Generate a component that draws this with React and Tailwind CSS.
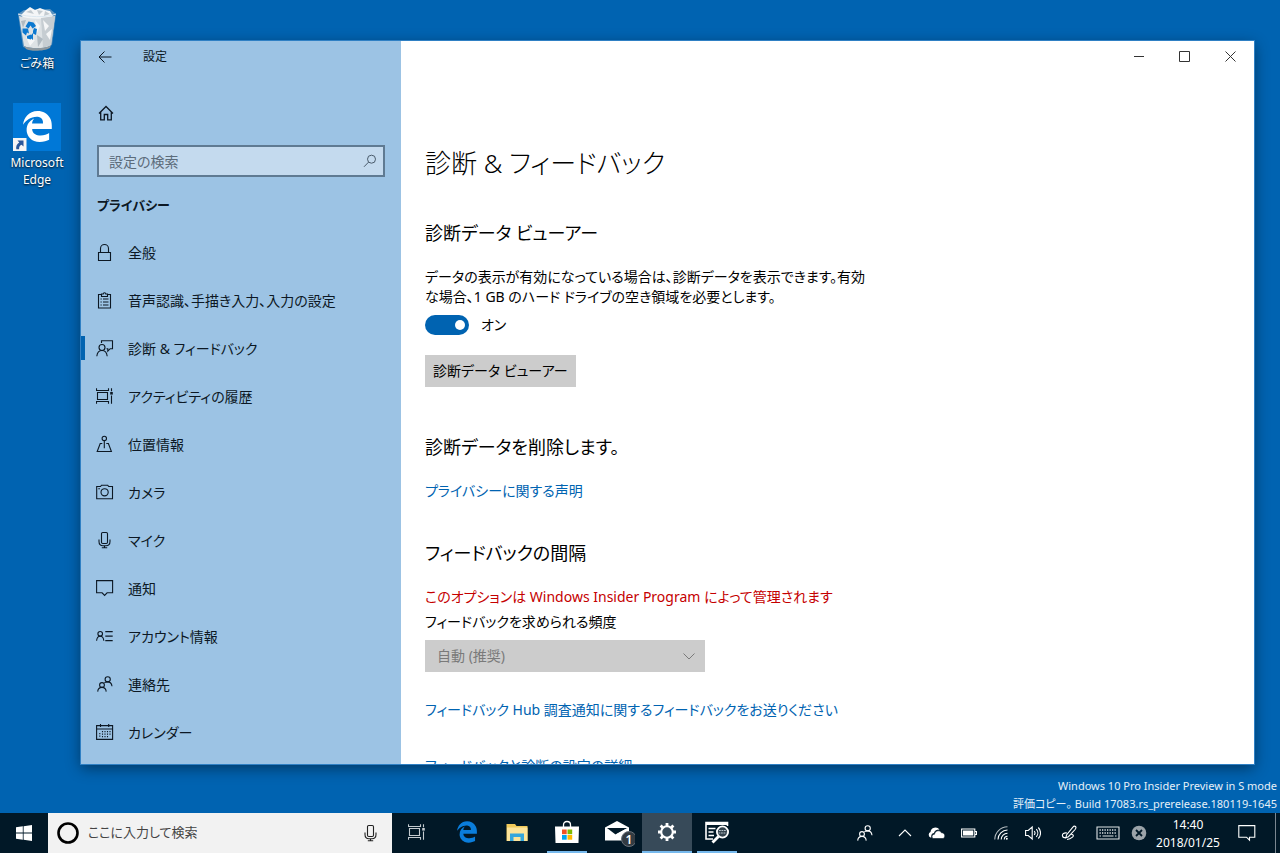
import { useState } from "react";

const EDGE_PATH =
  "M25.71,228.16l.35-.48c0,.16,0,.32-.07.48Zm460.58,15.51c0-44-7.76-84.46-28.81-122.4C416.5,47.88,343.91,8,258.89,8,119,7.72,40.62,113.21,26.06,227.68c42.42-61.31,117.07-121.38,220.37-125,0,0,109.67,0,99.42,105H170c6.37-37.39,18.55-59,34.34-78.93-75.05,34.9-121.85,96.1-120.75,188.32.83,71.45,50.13,144.84,120,172,83.35,31.84,192.77,7.2,240.13-21.33V363.31C363.6,419.8,173.6,424.23,172.21,295.74H486.29V243.67Z";

function Glyph({ size = "size-[18px]", box = 18, children }) {
  return (
    <svg
      className={`${size} shrink-0`}
      viewBox={`0 0 ${box} ${box}`}
      fill="none"
      stroke="currentColor"
      strokeWidth="1.1"
      aria-hidden="true"
    >
      {children}
    </svg>
  );
}

const people = (
  <>
    <circle cx="11.7" cy="4.3" r="2.6" />
    <path d="M8.4 7.6c.8-.5 1.8-.7 3.2-.7 2.6 0 4.1 1.6 4.4 4.3" />
    <circle cx="6" cy="10" r="2.4" />
    <path d="M1.7 16.6c.2-2.7 1.8-4.2 4.3-4.2s4 1.5 4.2 4.2" />
  </>
);

const taskView = (
  <>
    <path d="M.5 1.2v2.3h12V1.2M.5 16.8v-2.3h12v2.3M1.5 5.5h10v7h-10zM15.5 1.2v3M15.5 8.5v8.3" />
    <path d="M14.2 5h2.6v2.6h-2.6z" fill="currentColor" stroke="none" />
  </>
);

const mic = (
  <>
    <rect x="5.5" y="1.5" width="6" height="11" rx="1.2" />
    <path d="M3 8.5v2c0 2.8 1.8 4.2 4 4.2h3c2.2 0 4-1.4 4-4.2v-2M8.5 14.7v2.6M5.8 16.8h5.4" />
  </>
);

const NAV = [
  {
    label: "全般",
    icon: <path d="M2.5 9.5h12v8h-12zM4.5 9.5v-4a4 4 0 0 1 8 0v4" />,
  },
  {
    label: "音声認識、手描き入力、入力の設定",
    icon: (
      <path d="M5.5 3.5h-3v13.5h12V3.5h-3M5.5 5.5v-2.5h1.7a1.3 1.3 0 0 1 2.6 0h1.700v2.500zM4.500 8h1.200M7 8h5.500M4.500 11h1.200M7 11h5.500M4.500 14h1.200M7 14h5.500" />
    ),
  },
  {
    label: "診断 & フィードバック",
    active: true,
    icon: (
      <>
        <circle cx="6" cy="8.5" r="3" />
        <path d="M.8 17.2c.4-3.600 2.400-5.700 5.200-5.700s4.800 2.100 5.200 5.700M5.500 4V1.700h11v8h-2.300l-2.400 2.400V9.700h-1.300" />
      </>
    ),
  },
  { label: "アクティビティの履歴", icon: taskView },
  {
    label: "位置情報",
    icon: (
      <>
        <circle cx="8.3" cy="3.4" r="2.2" />
        <path d="M8.300 5.600v7.600M6.300 8.500H4.200l-3 8h14.200l-3-8h-2.100" />
      </>
    ),
  },
  {
    label: "カメラ",
    icon: (
      <>
        <path d="M.7 3.500h3.800l1-1.300h6.200l1 1.300h3.800v12.300H.7z" />
        <circle cx="8.6" cy="9.3" r="3.6" />
        <path d="M2.300 5.700h1.600" />
      </>
    ),
  },
  { label: "マイク", icon: mic },
  { label: "通知", icon: <path d="M.6 1.600h16v12.200h-5.500l-2.500 2.600-2.500-2.600H.6z" /> },
  {
    label: "アカウント情報",
    icon: (
      <>
        <circle cx="4.2" cy="6.8" r="2.3" />
        <path d="M.6 13.800c.2-3 1.500-4.600 3.600-4.600s3.400 1.600 3.600 4.600M9.300 4.600h7.400M9.300 9.100h7.400M9.300 13.600h7.400" />
      </>
    ),
  },
  { label: "連絡先", icon: people },
  {
    label: "カレンダー",
    icon: (
      <>
        <path d="M.6 2.600h16v13.800H.6zM.6 6h16M4.500 1v3M12.700 1v3" />
        <path
          d="M6.500 8v6.600M9 8v6.600M11.500 8v6.600M14 8v5M3.800 10v4.600"
          strokeDasharray="1.3 1.2"
        />
      </>
    ),
  },
];

function RecycleBin() {
  return (
    <svg className="size-12" viewBox="0 0 48 48" aria-hidden="true">
      <path d="M5 10 11 6l26-1 6 5-4 31-8 4-12 1-9-3z" fill="#a9bccb" opacity=".55" />
      <path d="M8 11 13 6l4-3 5 3 5-2 5 2 5 1 3 5-4 4H12z" fill="#f4f6f7" />
      <path d="m13 8 5-2 3 4zM24 6l6 1-4 4zM32 7l5 3-6 2z" fill="#c3cbd0" />
      <path d="M6 12c9 3 26 4 36 0l-4 29c-5 4-21 4-27 1z" fill="#dde2e5" />
      <path d="M28 14 42 12l-4 29-8 3z" fill="#c6cdd2" />
      <path d="m30 16 6 6-4 5zM33 30l6-5-2 11zM13 33l9 3-5 6zM22 16l5 6-3 7z" fill="#f5f6f7" />
      <path d="m24 31 6 4-5 8zM8 17l5-1-3 8z" fill="#b0bac1" />
      <path d="M11 42c6 3 22 3 27-1l-1 3c-5 3-19 4-24 1z" fill="#8f999f" />
      <path d="M5 10c9 3 28 4 38 0" fill="none" stroke="#dbe8f1" strokeWidth="1" />
      <g fill="#0b78d0">
        <path d="m12.500 22.500 3-5 5 1 2.500 3.500-3.500 2.500-2-3-2 3z" />
        <path d="m9.500 24.500 5.500 0 1 5-2-1-1 3-3.500-3z" />
        <path d="m14 32 4-1.500v5l-4-1z" />
        <path d="m20 29.500 3 1.500 1-6-3-1-1 3zM20 29l-3.500 4 3.500 3z" />
      </g>
    </svg>
  );
}

function EdgeTile() {
  return (
    <svg className="size-12" viewBox="0 0 48 48" aria-hidden="true">
      <path d="M0 0h48v48H0z" fill="#0078d7" />
      <g transform="translate(8.4 7.4) scale(.0625)">
        <path d={EDGE_PATH} fill="#fff" />
      </g>
      <path d="M0 35h13.500v13H0z" fill="#f5f5f5" />
      <path d="M4.500 37.500h6v6l-2-1.800c-2 1-2.500 2.300-2.400 4.600H3.300c-.6-3.200.6-5.500 3-6.900z" fill="#2a579a" />
    </svg>
  );
}

function DesktopIcon({ label, children }) {
  return (
    <button className="flex w-full flex-col items-center gap-[3px] text-center text-[12px] leading-[17px] text-white [text-shadow:0_1px_2px_rgb(0_0_0/0.9)]">
      {children}
      <span className="w-16">{label}</span>
    </button>
  );
}

function Sidebar() {
  return (
    <aside className="flex w-80 shrink-0 flex-col bg-[#9cc3e4] text-[#0c1824]">
      <div className="flex h-8 items-center text-[12px]">
        <button aria-label="戻る" className="flex h-8 w-12 items-center justify-center">
          <Glyph size="size-3.5" box={14}>
            <path d="M13.500 7H1M6.500 1.500 1 7l5.500 5.500" strokeWidth="1" />
          </Glyph>
        </button>
        <span className="pl-3.5">設定</span>
      </div>
      <button aria-label="ホーム" className="mt-4 flex h-12 w-[50px] items-center justify-center">
        <Glyph size="size-4" box={16}>
          <path d="M1 8.500 8 1.500l7 7M2.700 7v7.800h3.600V9.500h3.400v5.300h3.600V7" strokeWidth="1.300" />
        </Glyph>
      </button>
      <label className="mx-4 mt-2 flex h-8 items-center border-2 border-[#5f7a92] bg-[#c4daee] pr-1.5 pl-2.5">
        <input
          type="text"
          aria-label="設定の検索"
          placeholder="設定の検索"
          className="min-w-0 flex-1 bg-transparent text-[14px] outline-none placeholder:text-[#5c6c7b]"
        />
        <Glyph size="size-3.5" box={14}>
          <g stroke="#4a5b6b" strokeWidth="1">
            <circle cx="8.500" cy="5.200" r="4" />
            <path d="M5.600 8.100 1 12.800" />
          </g>
        </Glyph>
      </label>
      <h2 className="mt-[18px] px-4 text-[13px] leading-5 font-bold">プライバシー</h2>
      <nav className="mt-[13px]">
        {NAV.map((item) => (
          <a
            key={item.label}
            href="#"
            aria-current={item.active ? "page" : undefined}
            className="flex h-12 items-center text-[14px]"
          >
            <span className={item.active ? "h-6 w-1 bg-[#0063b1]" : "h-6 w-1"} />
            <span className="flex items-center gap-3.5 pl-[11px]">
              <Glyph>{item.icon}</Glyph>
              {item.label}
            </span>
          </a>
        ))}
      </nav>
    </aside>
  );
}

function WindowButtons() {
  return (
    <div className="flex h-8 shrink-0 justify-end text-[#333]">
      <button aria-label="最小化" className="flex w-[46px] items-center justify-center">
        <Glyph size="size-3" box={12}><path d="M1 5.500h10" strokeWidth="1" /></Glyph>
      </button>
      <button aria-label="最大化" className="flex w-[46px] items-center justify-center">
        <Glyph size="size-3" box={12}><path d="M.5.500h10v10H.5z" strokeWidth="1" /></Glyph>
      </button>
      <button aria-label="閉じる" className="flex w-[46px] items-center justify-center">
        <Glyph size="size-3" box={12}><path d="m.5.500 10 10M10.500.500l-10 10" strokeWidth="1" /></Glyph>
      </button>
    </div>
  );
}

function Content() {
  const [on, setOn] = useState(true);
  return (
    <main className="flex min-w-0 flex-1 flex-col overflow-hidden bg-white text-black">
      <WindowButtons />
      <div className="flex flex-col items-start px-6 pt-[72px] text-[14px] leading-5">
        <h1 className="text-[26px] leading-9 font-light">診断 &amp; フィードバック</h1>
        <h2 className="mt-[38px] text-[18px] leading-7">診断データ ビューアー</h2>
        <p className="mt-5">
          データの表示が有効になっている場合は、診断データを表示できます。有効
          <br />
          な場合、1 GB のハード ドライブの空き領域を必要とします。
        </p>
        <label className="mt-2 flex items-center gap-3">
          <input
            type="checkbox"
            role="switch"
            checked={on}
            onChange={(e) => setOn(e.target.checked)}
            className="flex h-5 w-11 appearance-none items-center rounded-full bg-[#777] px-1 before:size-2.5 before:rounded-full before:bg-white before:content-[''] checked:justify-end checked:bg-[#0063b1]"
          />
          {on ? "オン" : "オフ"}
        </label>
        <button className="mt-5 h-8 bg-[#ccc] px-2">診断データ ビューアー</button>
        <h2 className="mt-[46px] text-[18px] leading-7">診断データを削除します。</h2>
        <a href="#" className="mt-5 text-[#0063b1]">プライバシーに関する声明</a>
        <h2 className="mt-[38px] text-[18px] leading-7">フィードバックの間隔</h2>
        <p className="mt-5 text-[#c50000]">このオプションは Windows Insider Program によって管理されます</p>
        <label htmlFor="frequency" className="mt-[5px]">フィードバックを求められる頻度</label>
        <div className="mt-2 grid w-[280px] items-center">
          <select
            id="frequency"
            disabled
            className="col-start-1 row-start-1 h-8 appearance-none bg-[#ccc] px-3 text-[#7a7a7a] opacity-100"
          >
            <option>自動 (推奨)</option>
          </select>
          <span className="pointer-events-none col-start-1 row-start-1 mr-2.5 justify-self-end text-[#7a7a7a]">
            <Glyph size="size-3" box={12}><path d="m.5 3.500 5.500 5.500 5.500-5.500" strokeWidth="1" /></Glyph>
          </span>
        </div>
        <a href="#" className="mt-7 text-[#0063b1]">
          フィードバック Hub 調査通知に関するフィードバックをお送りください
        </a>
        <a href="#" className="mt-9 text-[#0063b1]">フィードバックと診断の設定の詳細</a>
      </div>
    </main>
  );
}

function TaskButton({ label, running, active, children }) {
  return (
    <button
      aria-label={label}
      className={
        active
          ? "flex w-[50px] flex-col items-center bg-[#374a59] text-white"
          : "flex w-[50px] flex-col items-center text-[#c3cacf]"
      }
    >
      <span className="flex flex-1 items-center justify-center">{children}</span>
      <span className={running ? (active ? "h-0.5 w-full bg-[#76b9ed]" : "h-0.5 w-10 bg-[#76b9ed]") : "h-0.5"} />
    </button>
  );
}

function TaskApps() {
  return (
    <div className="flex">
      <TaskButton label="タスク ビュー">
        <Glyph>{taskView}</Glyph>
      </TaskButton>
      <TaskButton label="Microsoft Edge">
        <svg className="size-[22px]" viewBox="0 0 512 512"><path d={EDGE_PATH} fill="#0a7ddb" /></svg>
      </TaskButton>
      <TaskButton label="エクスプローラー">
        <svg className="size-6" viewBox="0 0 24 24">
          <path d="M1.500 4h8.500l1.500 2h11v15h-21z" fill="#f0c95a" />
          <path d="M2 7.500h20.500V21H2z" fill="#fde49a" />
          <path d="M5 13.500h14V21h-3.500v-4h-7v4H5z" fill="#35a6dc" />
        </svg>
      </TaskButton>
      <TaskButton label="Microsoft Store" running>
        <svg className="size-6" viewBox="0 0 24 24">
          <path d="M8.500 7V5c0-2 1.300-3.500 3.500-3.500S15.500 3 15.500 5v2" fill="none" stroke="#fff" strokeWidth="1.300" />
          <path d="M0 6.500h24l-.5 16.500H.5z" fill="#fff" />
          <path d="M7 9.500h4.700v4.700H7z" fill="#f25022" />
          <path d="M12.500 9.500h4.700v4.700h-4.700z" fill="#7fba00" />
          <path d="M7 15h4.700v4.700H7z" fill="#00a4ef" />
          <path d="M12.500 15h4.700v4.700h-4.700z" fill="#ffb900" />
        </svg>
      </TaskButton>
      <TaskButton label="メール">
        <svg className="h-8 w-9" viewBox="0 0 36 32">
          <path d="M6 11.500 18 5l12 6.500v13H6z" fill="#fff" />
          <path d="M8 12h20.500L16.500 18.500z" fill="#011827" />
          <path d="m16.500 18.500 3 2.500 9-9z" fill="#fff" />
          <circle cx="30" cy="23" r="7.500" fill="#333b42" stroke="#68717a" strokeWidth="1" />
          <text x="30" y="27.500" textAnchor="middle" fontSize="12" fontWeight="600" fill="#fff">1</text>
        </svg>
      </TaskButton>
      <TaskButton label="設定" running active>
        <svg className="size-5" viewBox="0 0 20 20" stroke="#fff" fill="none">
          <circle cx="10" cy="10" r="5.800" strokeWidth="2.100" />
          <path
            d="M10 1v3M10 16v3M1 10h3M16 10h3M3.600 3.600l2.200 2.200M14.200 14.200l2.200 2.200M16.400 3.600l-2.200 2.200M5.800 14.200l-2.200 2.200"
            strokeWidth="2.800"
          />
        </svg>
      </TaskButton>
      <TaskButton label="診断データ ビューアー" running>
        <svg className="h-6 w-[26px]" viewBox="0 0 26 24" fill="none" stroke="#fff">
          <path d="M9 19H2V2.500h21.500V6" strokeWidth="1.600" />
          <path d="M2 3.500h21.500" strokeWidth="3" />
          <path d="M4.500 8.500h7M4.500 12h5M4.500 15.500h5.500" strokeWidth="1.500" />
          <circle cx="18.500" cy="12" r="5.600" fill="#33424d" strokeWidth="1.800" />
          <path d="M15 10.500h7M14.500 13h8" stroke="#b9c4cc" strokeWidth="1.200" strokeDasharray="1.800 .7" />
          <path d="m14.500 16.500-6 6" strokeWidth="2.800" />
        </svg>
      </TaskButton>
    </div>
  );
}

function TrayButton({ label, width, children }) {
  return (
    <button aria-label={label} className={`${width} flex items-center justify-center`}>
      {children}
    </button>
  );
}

function Tray() {
  return (
    <div className="ml-auto flex text-white">
      <TrayButton label="People" width="w-12"><Glyph>{people}</Glyph></TrayButton>
      <TrayButton label="隠れているインジケーターを表示します" width="w-8">
        <Glyph size="size-3.5" box={14}><path d="m1 10 6-6 6 6" /></Glyph>
      </TrayButton>
      <TrayButton label="OneDrive" width="w-8">
        <svg className="h-3.5 w-[18px]" viewBox="0 0 18 14">
          <path d="M2.500 11.500a3 3 0 0 1 0-5.500 5 5 0 0 1 9-2.500c-3.500 0-5 1.500-5.500 3.500-2.500.3-3 2.500-2.600 4.500z" fill="#fff" />
          <path d="M5.500 12.500c-2.300-.6-1.800-4.300 1-4.300.4-3.700 5.300-4.700 7-1.400 3.500-.3 4.500 4.500 1.700 5.700z" fill="#fff" stroke="#011827" strokeWidth=".6" />
        </svg>
      </TrayButton>
      <TrayButton label="バッテリー" width="w-8">
        <Glyph size="size-4" box={16}>
          <path d="M.6 4h13.200v8H.6zM14 6.500h1.500v3H14" />
          <path d="M2 5.500h10.300v5H2z" fill="currentColor" stroke="none" />
        </Glyph>
      </TrayButton>
      <TrayButton label="ネットワーク" width="w-8">
        <Glyph size="size-3.5" box={14}>
          <path d="M.8 13.500C.8 6.500 6.500.8 13.500.8" opacity=".7" />
          <path d="M4 13.500c0-5.200 4.300-9.500 9.500-9.500" />
          <path d="M7.200 13.500c0-3.500 2.800-6.300 6.300-6.300" />
          <path d="M10.300 13.500c0-1.800 1.400-3.200 3.200-3.200" />
          <circle cx="12.800" cy="12.800" r="1" fill="currentColor" stroke="none" />
        </Glyph>
      </TrayButton>
      <TrayButton label="音量" width="w-8">
        <Glyph size="size-4" box={16}>
          <path d="M.6 5.500h2.600l4-3.500v12l-4-3.500H.6zM9.200 6c1 1.200 1 2.800 0 4M11.300 4.200c2 2.200 2 5.400 0 7.600M13.300 2.500c3 3.200 3 7.800 0 11" />
        </Glyph>
      </TrayButton>
      <TrayButton label="Windows Ink" width="w-10">
        <Glyph size="size-4" box={16}>
          <path d="M14.500 1.500c-1-.8-2-.2-2.800.8L5.500 10l-.6 2.800 2.500-1.100 6.700-7.200c.8-1 1.200-2.200.4-3zM6 8C3 7.500 1 9 1.500 11s2.500 2 4 1M9 9.500c2.500-.8 4.500.8 2.500 2.700-2 1.800-3.500 2.300-5.500 2.300" />
        </Glyph>
      </TrayButton>
      <TrayButton label="タッチ キーボード" width="w-[38px]">
        <svg className="h-3.5 w-6" viewBox="0 0 24 14" fill="none" stroke="#dfe3e6">
          <path d="M1 1h22v12H1z" strokeWidth="1.100" />
          <path d="M3.500 4h17M3.500 7h17" strokeWidth="1.300" strokeDasharray="1.300 1.200" />
          <path d="M3.500 10h1.500M6.500 10h11M19 10h1.500" strokeWidth="1.200" />
        </svg>
      </TrayButton>
      <TrayButton label="入力の状態" width="w-6">
        <svg className="size-4" viewBox="0 0 16 16">
          <circle cx="8" cy="8" r="7.300" fill="#9ba3a9" />
          <path d="m5 5 6 6M11 5l-6 6" stroke="#011827" strokeWidth="1.800" />
        </svg>
      </TrayButton>
      <button className="w-[74px] pt-0.5 text-center text-[12px] leading-[18px]">
        <time className="block">14:40</time>
        <time className="block">2018/01/25</time>
      </button>
      <TrayButton label="アクション センター" width="w-11">
        <Glyph><path d="M.8 1.600h16v11.600h-5.300v3l-3-3H.8z" /></Glyph>
      </TrayButton>
      <button aria-label="デスクトップの表示" className="ml-1.5 w-[5px] border-l border-[#7b8791]" />
    </div>
  );
}

export default function App() {
  return (
    <div className="flex h-screen flex-col overflow-hidden bg-[#0063b1] font-['Noto_Sans','Noto_Sans_CJK_JP',sans-serif] [font-feature-settings:'palt']">
      <div className="flex min-h-0 flex-1">
        <div className="flex w-[74px] shrink-0 flex-col gap-[31px] pt-1">
          <DesktopIcon label="ごみ箱"><RecycleBin /></DesktopIcon>
          <DesktopIcon label="Microsoft Edge"><EdgeTile /></DesktopIcon>
        </div>
        <div className="flex min-w-0 flex-1 flex-col pt-[41px] pl-[7px]">
          <section className="mr-[26px] flex min-h-0 flex-1 overflow-hidden shadow-[0_0_0_1px_#2f80c4,0_4px_14px_rgb(0_0_0/0.45)]">
            <Sidebar />
            <Content />
          </section>
          <footer className="mt-[13px] pr-[3px] text-right text-[11px] leading-[18px] text-[#e6f0f8]">
            <p>Windows 10 Pro Insider Preview in S mode</p>
            <p>評価コピー。 Build 17083.rs_prerelease.180119-1645</p>
          </footer>
        </div>
      </div>
      <div className="flex h-10 shrink-0 bg-[#011827]">
        <button aria-label="スタート" className="flex w-12 items-center justify-center">
          <svg className="size-4" viewBox="0 0 16 16" fill="#fff">
            <path d="M0 2.200 6.800 1.300v6.300H0zM7.600 1.200 16 0v7.600H7.600zM0 8.400h6.800v6.300L0 13.800zM7.600 8.400H16V16l-8.400-1.200z" />
          </svg>
        </button>
        <label className="flex w-[344px] items-center bg-[#f2f2f2] px-2 text-[#222]">
          <svg className="size-6" viewBox="0 0 24 24">
            <circle cx="12" cy="12" r="9.500" fill="none" stroke="#000" strokeWidth="2.600" />
          </svg>
          <input
            type="text"
            aria-label="ここに入力して検索"
            placeholder="ここに入力して検索"
            className="ml-2 min-w-0 flex-1 bg-transparent text-[13px] outline-none placeholder:text-[#444]"
          />
          <span className="mr-1"><Glyph>{mic}</Glyph></span>
        </label>
        <TaskApps />
        <Tray />
      </div>
    </div>
  );
}
